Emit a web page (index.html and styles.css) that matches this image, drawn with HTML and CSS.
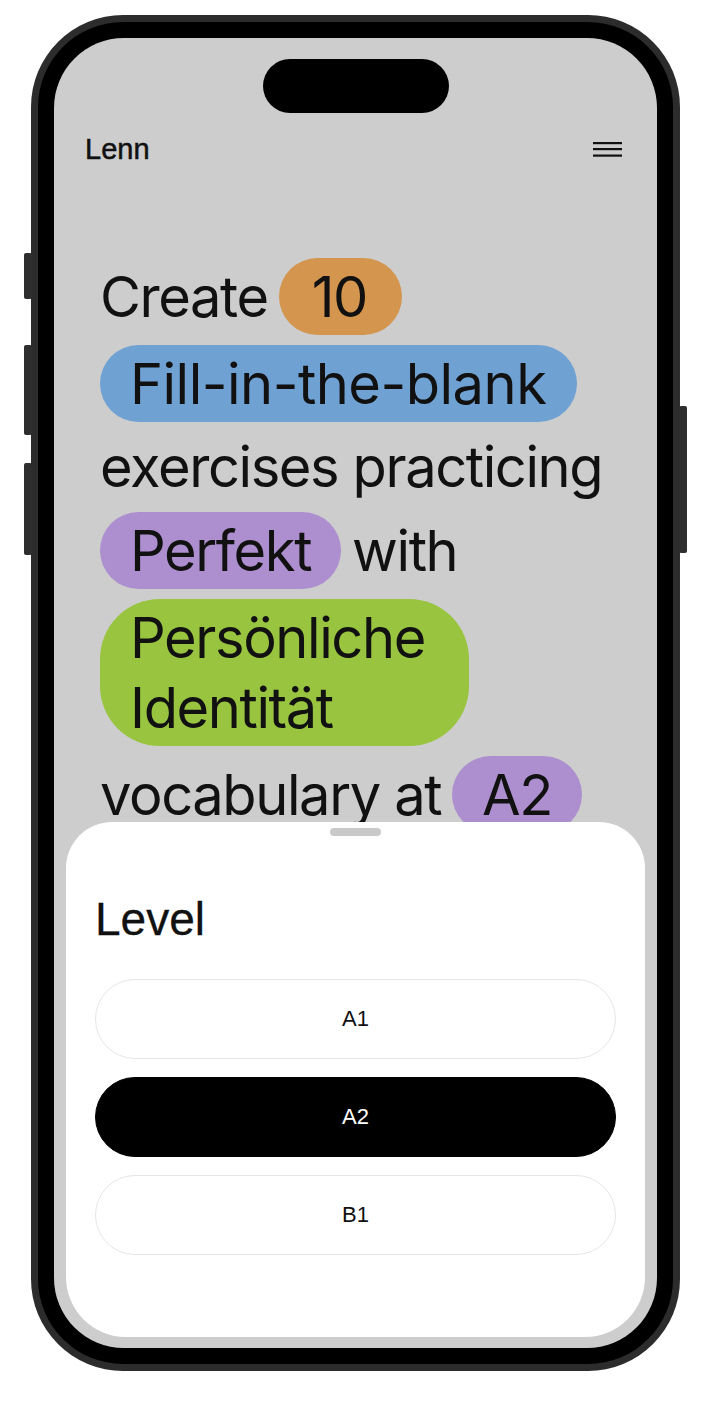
FILE: index.html
```html
<!DOCTYPE html>
<html lang="en">
<head>
<meta charset="utf-8">
<title>Lenn</title>
<link rel="stylesheet" href="styles.css">
</head>
<body>
<div class="phone">
  <span class="hw-btn hw-action"></span>
  <span class="hw-btn hw-vol-up"></span>
  <span class="hw-btn hw-vol-down"></span>
  <span class="hw-btn hw-power"></span>
  <div class="bezel">
    <div class="screen">
      <div class="island"></div>
      <header class="topbar">
        <span class="brand">Lenn</span>
        <svg class="menu" width="29" height="16" viewBox="0 0 29 16" aria-hidden="true">
          <rect x="0" y="1" width="29" height="2.2" fill="#111"/>
          <rect x="0" y="7" width="29" height="2.2" fill="#111"/>
          <rect x="0" y="13.5" width="29" height="2.2" fill="#111"/>
        </svg>
      </header>
      <div class="prompt">
        <span class="word">Create</span>
        <span class="pill pill-orange">10</span>
        <span class="pill pill-blue">Fill-in-the-blank</span>
        <span class="word">exercises practicing</span>
        <span class="pill pill-purple">Perfekt</span>
        <span class="word">with</span>
        <span class="pill pill-green pill-wide">Persönliche<br>Identität</span>
        <span class="word">vocabulary at</span>
        <span class="pill pill-purple">A2</span>
      </div>
      <section class="sheet">
        <div class="handle"></div>
        <h2 class="sheet-title">Level</h2>
        <div class="options">
          <button class="option">A1</button>
          <button class="option option-selected">A2</button>
          <button class="option">B1</button>
        </div>
      </section>
    </div>
  </div>
</div>
</body>
</html>
```

FILE: styles.css
```css
* { box-sizing: border-box; }

html, body {
  margin: 0;
  padding: 0;
  background: #ffffff;
}

body {
  width: 728px;
  height: 1404px;
  overflow: hidden;
  font-family: "Liberation Sans", Arial, sans-serif;
  color: #111;
}

.phone {
  position: relative;
  margin: 15px 0 0 31px;
  width: 649px;
  height: 1356px;
  border-radius: 92px;
  background: #2c2c2c;
  padding: 7px;
}

.hw-btn {
  position: absolute;
  width: 8px;
  background: #2e2e2e;
  border-radius: 2px;
}
.hw-action { left: -7px; top: 238px; height: 46px; }
.hw-vol-up { left: -7px; top: 330px; height: 90px; }
.hw-vol-down { left: -7px; top: 448px; height: 92px; }
.hw-power { right: -7px; top: 391px; height: 147px; }

.bezel {
  width: 100%;
  height: 100%;
  background: #000;
  border-radius: 85px;
  padding: 16px;
}

.screen {
  position: relative;
  width: 100%;
  height: 100%;
  background: #cdcdcd;
  border-radius: 70px;
  overflow: hidden;
  display: flex;
  flex-direction: column;
}

.island {
  align-self: center;
  margin-top: 21px;
  width: 186px;
  height: 54px;
  border-radius: 27px;
  background: #000;
  flex: none;
}

.topbar {
  margin-top: 18px;
  height: 36px;
  padding: 0 35px 0 31px;
  display: flex;
  align-items: center;
  justify-content: space-between;
  flex: none;
}

.brand {
  font-family: "Liberation Sans", Arial, sans-serif;
  font-size: 29px;
  line-height: 36px;
  color: #111;
  -webkit-text-stroke: 0.5px #111;
}

.menu { display: block; }

.prompt {
  margin-top: 91px;
  padding: 0 40px 0 46px;
  display: flex;
  flex-wrap: wrap;
  align-items: center;
  column-gap: 11px;
  row-gap: 10px;
  font-family: Inter, "Noto Sans", sans-serif;
  font-size: 56px;
  line-height: 70px;
  letter-spacing: -1.4px;
  color: #111;
}

.word { white-space: nowrap; }

.pill {
  display: inline-block;
  padding: 3.5px 30px 3.5px 30px;
  border-radius: 40px;
  white-space: nowrap;
}
.pill-orange { background: #d4954f; padding-left: 33px; padding-right: 35px; }
.pill-blue { background: #6fa1d3; letter-spacing: -0.5px; padding-right: 31px; }
.pill-purple { background: #ad8fcf; }
.pill-green { background: #99c43f; }
.pill-wide { padding-right: 44px; border-radius: 60px; }

.sheet {
  position: absolute;
  left: 12px;
  right: 12px;
  bottom: 11px;
  height: 515px;
  background: #fff;
  border-radius: 46px 46px 60px 60px;
  padding: 6px 29px 0 29px;
  display: flex;
  flex-direction: column;
}

.handle {
  align-self: center;
  width: 51px;
  height: 8px;
  border-radius: 4px;
  background: #c9c9c9;
}

.sheet-title {
  margin: 56px 0 0 0;
  font-family: "Liberation Sans", Arial, sans-serif;
  font-weight: 400;
  font-size: 46px;
  line-height: 55px;
  color: #111;
  -webkit-text-stroke: 0.3px #111;
}

.options {
  margin-top: 32px;
  display: flex;
  flex-direction: column;
  gap: 18px;
}

.option {
  height: 80px;
  width: 100%;
  border-radius: 40px;
  border: 1px solid #e6e6e6;
  background: #fff;
  color: #111;
  font-family: "Liberation Sans", Arial, sans-serif;
  font-size: 22px;
  padding: 0;
}

.option-selected {
  background: #000;
  border-color: #000;
  color: #fff;
}
```
